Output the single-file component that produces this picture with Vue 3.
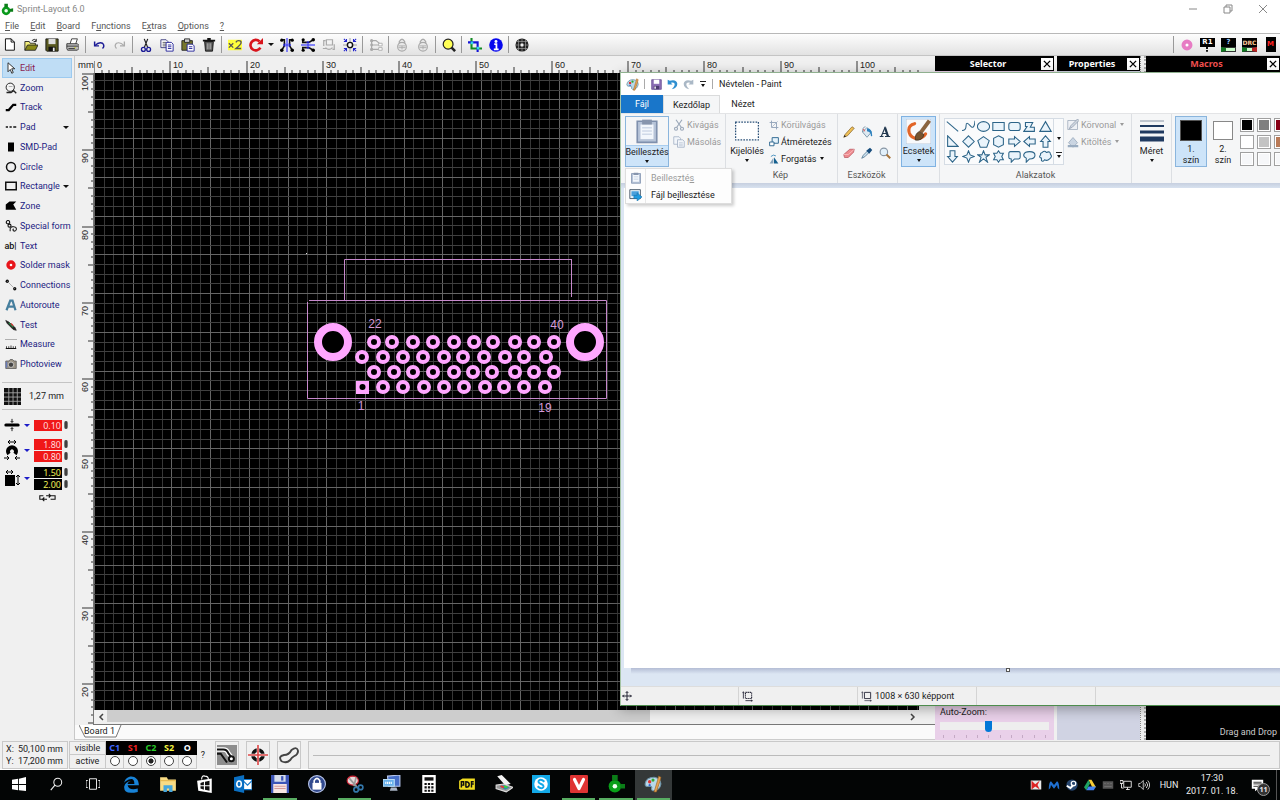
<script setup>
import { h, ref } from 'vue'

const icons = {
  leaf: '<circle cx="7" cy="10" r="5" fill="#0a9a1c"/><path d="M5 6V2h4v4M11 8l4-1v4h-4" fill="#0b7d18"/><circle cx="7" cy="10" r="2" fill="#f2fff2"/>',
  new: '<path d="M3 1h7l4 4v10H3z" fill="#fff" stroke="#111" stroke-width="1.2"/><path d="M10 1v4h4" fill="none" stroke="#111" stroke-width="1.2"/>',
  open: '<path d="M1 14V4h5l1 2h6v3" fill="#f3ee7a" stroke="#222"/><path d="M1 14l3-6h12l-3 6z" fill="#8a8a18" stroke="#222"/><path d="M9 3q3-3 5 0M14 1v3h-3" fill="none" stroke="#111"/>',
  save: '<path d="M1 1h14v14H2l-1-1z" fill="#5a5a20" stroke="#111"/><path d="M4 1h8v6H4z" fill="#ddd"/><path d="M4 10h8v5H4z" fill="#111"/><path d="M9 11h2v4H9z" fill="#eee"/>',
  print: '<path d="M5 7l2-6h7l-2 6" fill="#fff" stroke="#222"/><path d="M1 7h13l2 2v4l-2 2H2l-1-2z" fill="#bbb" stroke="#222"/><path d="M1 10h14M3 13h8" stroke="#222"/><path d="M10 12h2" stroke="#cc0"/>',
  undo: '<path d="M3 4v5h5" fill="none" stroke="#1c1c96" stroke-width="1.7"/><path d="M3 9q5-5 9-3 3 3 0 6" fill="none" stroke="#1c1c96" stroke-width="1.6"/>',
  redo: '<path d="M13 4v5H8" fill="none" stroke="#aaa" stroke-width="1.5"/><path d="M13 9Q8 4 4 6q-3 3 0 6" fill="none" stroke="#aaa" stroke-width="1.4"/>',
  cut: '<path d="M6 1l4 10M10 1L6 11" stroke="#222" stroke-width="1.4"/><circle cx="5" cy="13" r="2.2" fill="none" stroke="#1c1c96" stroke-width="1.5"/><circle cx="11" cy="13" r="2.2" fill="none" stroke="#1c1c96" stroke-width="1.5"/>',
  copy: '<path d="M1 2h6l2 2v7H1z" fill="#fff" stroke="#333377"/><path d="M3 5h4M3 7h4M3 9h4" stroke="#555"/><path d="M7 5h6l2 2v8H7z" fill="#fff" stroke="#1c1c96"/><path d="M9 8h4M9 10h4M9 12h4" stroke="#1c1c96"/>',
  paste: '<path d="M1 3h12v11H1z" fill="#77772b" stroke="#222"/><path d="M4 1h6v4H4z" fill="#ccc" stroke="#222"/><path d="M7 7h6l2 2v6H7z" fill="#fff" stroke="#1c1c96"/><path d="M9 10h4M9 12h4" stroke="#1c1c96"/>',
  trash: '<path d="M3 4h10l-1 11H4z" fill="#555" stroke="#111"/><path d="M1 3h14M6 1h4" stroke="#111" stroke-width="2"/><path d="M6 6v7M8 6v7M10 6v7" stroke="#bbb"/>',
  x2: '<path d="M0 2h16v12H0z" fill="#ffff3c"/><path d="M1 6l5 5M6 6l-5 5M9 5q1-2 3-2 3 0 3 2 0 2-6 7h6" fill="none" stroke="#555" stroke-width="1.5"/>',
  rotate: '<path d="M13 11A6 6 0 1 1 12 4" fill="none" stroke="#d8141c" stroke-width="3"/><path d="M9 7h7V0z" fill="#d8141c"/>',
  mirrorH: '<path d="M8 0v16" stroke="#22f" stroke-width="1.2"/><path d="M2 2h3v7l-3 5M14 2h-3v7l3 5" fill="none" stroke="#111" stroke-width="1.8"/><circle cx="2" cy="14" r="2"/><circle cx="14" cy="14" r="2"/><circle cx="2" cy="2.5" r="1.8"/><circle cx="14" cy="2.5" r="1.8"/><path d="M4 8h8M6 6L4 8l2 2M10 6l2 2-2 2" fill="none" stroke="#22f"/>',
  mirrorV: '<path d="M0 8h16" stroke="#22f" stroke-width="1.2"/><path d="M2 2v3h7l5-3M2 14v-3h7l5 3" fill="none" stroke="#111" stroke-width="1.8"/><circle cx="14" cy="2" r="2"/><circle cx="14" cy="14" r="2"/><circle cx="2.5" cy="2" r="1.8"/><circle cx="2.5" cy="14" r="1.8"/><path d="M8 4v8M6 6l2-2 2 2M6 10l2 2 2-2" fill="none" stroke="#22f"/>',
  swap: '<path d="M2 9V3h2M14 7v6h-2M5 2h7v6H5zM4 11q4 4 8 0M1 12h4" fill="none" stroke="#aaa" stroke-width="1.4"/>',
  snap: '<path d="M8 0v16M0 8h16" stroke="#999"/><circle cx="8" cy="8" r="3" fill="#fff" stroke="#111" stroke-width="1.7"/><path d="M1 1l3 3M4 1v3H1M15 1l-3 3M12 1v3h3M1 15l3-3M1 12h3v3M15 15l-3-3M12 15v-3h3" fill="none" stroke="#22c" stroke-width="1.2"/>',
  align: '<path d="M3 3v10M3 3h5l5 4M3 8h8M3 13h8" stroke="#aaa" stroke-width="1.4" fill="none"/><circle cx="3" cy="3" r="1.8" fill="#aaa"/><circle cx="3" cy="8" r="1.6" fill="#aaa"/><circle cx="3" cy="13" r="1.8" fill="#aaa"/><path d="M11 6h4v3h-4zM11 11h4v3h-4z" fill="#fff" stroke="#aaa"/>',
  lock: '<path d="M5 7V4q3-5 6 0v3" fill="none" stroke="#aaa" stroke-width="1.6"/><circle cx="8" cy="10" r="5" fill="#e8e8e8" stroke="#aaa" stroke-width="1.3"/><path d="M4 9h8M4 11h8M8 9v4" stroke="#aaa"/>',
  glass: '<circle cx="7" cy="7" r="5.6" fill="#ffff55" stroke="#222" stroke-width="1.4"/><path d="M11 11l4 4" stroke="#222" stroke-width="3"/>',
  crop: '<path d="M4 0v12h12" fill="none" stroke="#128c22" stroke-width="2.4"/><path d="M0 5h11v11" fill="none" stroke="#1313d6" stroke-width="2.4"/><path d="M3 4h3v3H3zM10 10h3v3h-3z" fill="#33d5e8"/>',
  info: '<circle cx="8" cy="8" r="7.8" fill="#0707ee"/><circle cx="8" cy="4" r="1.7" fill="#fff"/><path d="M6 7h2.500v6M5.500 13h5.500" fill="none" stroke="#fff" stroke-width="2"/>',
  globe: '<circle cx="8" cy="8" r="7.5" fill="#222"/><path d="M2 4h12M0 8h16M2 12h12M4 2v12M8 0v16M12 2v12" stroke="#999" stroke-width=".8"/><circle cx="8" cy="8" r="2.5" fill="#eee" stroke="#111"/>',
  padpink: '<circle cx="8" cy="8" r="4" fill="#fff" stroke="#e77cc4" stroke-width="4.5"/>',
  arrow: '<path d="M4 1v12l3-3 2 5 2-1-2-5h4z" fill="#fff" stroke="#222" stroke-width="1.2"/>',
  zoom: '<circle cx="7" cy="7" r="5.5" fill="#f4f4f4" stroke="#222" stroke-width="1.3"/><path d="M11 11l4 4M2 14h6l3-2" fill="none" stroke="#222" stroke-width="1.8"/><path d="M5 6h5" stroke="#999"/>',
  track: '<path d="M1 12h4l6-7h4" fill="none" stroke="#000" stroke-width="3"/>',
  pad: '<path d="M1 8h3M6 8h3M11 8h4" stroke="#111" stroke-width="2"/>',
  smd: '<path d="M4 2h8v12H4z" fill="#000"/>',
  circle: '<circle cx="8" cy="8" r="6" fill="none" stroke="#111" stroke-width="2"/>',
  rect: '<path d="M1 3h14v10H1z" fill="none" stroke="#111" stroke-width="2"/>',
  zone: '<path d="M1 13V6l5-4h9l-4 4 4 7z" fill="#000"/>',
  special: '<circle cx="4" cy="3" r="2.3" fill="none" stroke="#111" stroke-width="1.5"/><circle cx="6" cy="7.5" r="2" fill="none" stroke="#111" stroke-width="1.5"/><path d="M7 15q-1-7 5-6 4 1 3 4-2 3-4 1-1-2 1-2" fill="none" stroke="#333" stroke-width="1.6"/>',
  mask: '<circle cx="8" cy="8" r="4" fill="#fff" stroke="#e8161c" stroke-width="4.5"/>',
  conn: '<circle cx="3" cy="3" r="2.2" fill="#111"/><circle cx="13" cy="13" r="2.2" fill="#111"/><path d="M3 3l10 10" stroke="#999"/>',
  auto: '<path d="M2 15L7 2h3l4 13M5 10h7" fill="none" stroke="#467f9e" stroke-width="3"/>',
  test: '<path d="M1 2l4 2 8 7 2 4-4-1-8-8z" fill="#222" stroke="#222"/><path d="M5 5l6 6" stroke="#2a8a44" stroke-width="1.5"/><path d="M8 6l3 3" stroke="#c33" stroke-width="1.5"/>',
  measure: '<path d="M0 2h16" stroke="#999"/><path d="M1 14h14" stroke="#111" stroke-width="1.4"/><path d="M2 14v-3M5 14v-3M8 14v-4M11 14v-3M14 14v-3" stroke="#111"/>',
  photo: '<path d="M1 4h4l2-2h3l2 2h3v10H1z" fill="#9a9385" stroke="#555"/><circle cx="8" cy="9" r="3.6" fill="#444" stroke="#ddd"/><path d="M2 5v8" stroke="#667bb8" stroke-width="2"/>',
  grid: '<path d="M0 0h16v16H0z" fill="#111"/><path d="M0 4.500h16M0 8.500h16M0 12.500h16M4.500 0v16M8.500 0v16M12.500 0v16" stroke="#aaa" stroke-width=".8"/>',
  line: '<path d="M1 8h14" stroke="#000" stroke-width="3.5" stroke-linecap="round"/><path d="M8 1v4M8 15v-4M6.500 3.500L8 5l1.500-1.500M6.500 12.500L8 11l1.500 1.500" fill="none" stroke="#000"/>',
  ring: '<path d="M4 2h8M6 0L4 2l2 2M10 0l2 2-2 2" fill="none" stroke="#000"/><path d="M5 14a4 4 0 1 1 6 0" fill="none" stroke="#000" stroke-width="4"/><path d="M0 18h5M11 18h5M3 16l2 2-2 2M13 16l-2 2 2 2" fill="none" stroke="#000"/>',
  size: '<path d="M1 5h10v11H1z" fill="#000"/><path d="M2 2h7M4 0L2 2l2 2M7 0l2 2-2 2M14 5v10M12 7l2-2 2 2M12 13l2 2 2-2" fill="none" stroke="#000"/>',
  loop: '<path d="M5 3H1v4h4M12 3h6v4h-5M11 1l2 2-2 2M6 5L4 7l2 2M4 7h5M8 3h5" fill="none" stroke="#111" stroke-width="1.2"/>',
  trackmode: '<path d="M0 0h16v16H0z" fill="#8d8d8d"/><path d="M0 3.500h5q3 0 4 3l3 4" fill="none" stroke="#fff" stroke-width="3.600"/><path d="M0 3.500h5q3 0 4 3l3 4M0 7h3l5 7" fill="none" stroke="#111" stroke-width="1.6"/><circle cx="11.500" cy="11" r="2" fill="#fff" stroke="#111" stroke-width="1.6"/>',
  target: '<circle cx="8" cy="8" r="4" fill="none" stroke="#111" stroke-width="3"/><path d="M8 0v16M0 8h16" stroke="#fff" stroke-width="2"/><path d="M8 0v16M0 8h16" stroke="#dc4444" stroke-width="1.3"/>',
  blob: '<path d="M2 13q-3-4 2-5 4 0 6-4 4-3 5 0 1 3-3 5-2 1-3 3-3 3-7 1z" fill="none" stroke="#444" stroke-width="1.5"/>',
  palette: '<path d="M1 8q1-6 8-6 6 1 6 6-1 6-7 6-2-1-1-3 0-1-2-1-4 1-4-2z" fill="#b8d8ea" stroke="#6f94a8"/><circle cx="5" cy="6" r="1.5" fill="#d33"/><circle cx="8" cy="4.5" r="1.4" fill="#3a3"/><circle cx="5" cy="9" r="1" fill="#36c"/><path d="M9 15l3-10 1-4 2 1-1 4-3 9z" fill="#e8a252" stroke="#9a6425" stroke-width=".6"/>',
  psave: '<path d="M1 1h14v14H1z" fill="#8d6fb5" stroke="#5a3f87"/><path d="M4 1h8v6H4z" fill="#fff"/><path d="M4 10h8v5H4z" fill="#4c3a70"/><path d="M5 11h2v3H5z" fill="#fff"/>',
  pundo: '<path d="M1 1v7h7L5.500 5.500Q12 4 11 9q-1 3-4 6 8-2 8-8-1-7-11-4.500z" fill="#2f8fd0"/>',
  predo: '<path d="M15 1v7H8l2.500-2.500Q4 4 5 9q1 3 4 6-8-2-8-8 1-7 11-4.500z" fill="#aab8c6"/>',
  clip: '<path d="M2 2h12v13H2z" fill="#b7c4d8" stroke="#7f90ad"/><path d="M4 4h8v9H4z" fill="#f3f7fc"/><path d="M5 1h6v3H5z" fill="#8795ad"/><path d="M5 6h6M5 8h6M5 10h6" stroke="#cfd9e8"/>',
  pcut: '<path d="M4 1l7 10M12 1L5 11" stroke="#9aa7b8" stroke-width="1.5"/><circle cx="4" cy="13" r="2" fill="none" stroke="#9aa7b8" stroke-width="1.5"/><circle cx="12" cy="13" r="2" fill="none" stroke="#9aa7b8" stroke-width="1.5"/>',
  pcopy: '<path d="M1 1h7l2 2v8H1z" fill="#f2f5fa" stroke="#9eabc0"/><path d="M6 5h7l2 2v8H6z" fill="#f2f5fa" stroke="#9eabc0"/><path d="M8 9h5M8 11h5M8 13h5" stroke="#b8c3d3"/>',
  pfile: '<path d="M1 2h13v11H1z" fill="#e8f3fb" stroke="#345"/><path d="M3 4h9v6H3z" fill="#4aa0dc"/><path d="M6 9h4V6l6 5-6 5v-3H6z" fill="#209be0" stroke="#1670a8" stroke-width=".7"/>',
  select: '<path d="M2 2h28v22H2z" fill="#fff" stroke="#2a5078" stroke-width="1.5" stroke-dasharray="2 1.5"/>',
  pcrop: '<path d="M4 1v11h11M1 4h11v11" fill="none" stroke="#93a4ba" stroke-width="1.5"/><path d="M5 11l9-9" stroke="#93a4ba"/>',
  presize: '<path d="M5 1h10v9H5z" fill="#e4f2fb" stroke="#2d6690" stroke-width="1.5"/><path d="M1 8h7v6H1z" fill="#fff" stroke="#2d6690" stroke-width="1.5"/>',
  prot: '<path d="M1 15l6-9v9z" fill="#8aa6bd"/><path d="M8 15V5l7 10z" fill="#14608f"/><path d="M3 4q4-4 8-1" fill="none" stroke="#2c80b5" stroke-width="1.3"/>',
  pencil: '<path d="M1 15l2-4L12 1l3 2L6 13z" fill="#f0c055" stroke="#8a6830"/><path d="M1 15l1-3 2 2z" fill="#222"/>',
  bucket: '<path d="M2 8l6-6 6 6-6 7z" fill="#dfe9f1" stroke="#63849c"/><path d="M2 8q0-7 4-7" fill="none" stroke="#63849c"/><path d="M8 3q7 0 7 10-2 2-2-1 0-4-5-5z" fill="#2d82bf"/><path d="M3 4l2 3" stroke="#d66" stroke-width="1.5"/>',
  letterA: '<path d="M1 14h5M8 14h7M3 14L8 2l4 12M5 10h6" fill="none" stroke="#22384f" stroke-width="1.5"/><path d="M8 2l4 12" stroke="#22384f" stroke-width="3"/>',
  eraser: '<path d="M1 10l8-7h6l-1 4-7 7H2z" fill="#ee8a8e" stroke="#b85860"/><path d="M1 10h6l8-7" fill="none" stroke="#f9c3c5"/>',
  dropper: '<path d="M1 15l2-4 6-6 2 2-6 6z" fill="#cfe5f2" stroke="#456b88"/><path d="M7 5l5-4 3 3-4 5z" fill="#174c7c"/>',
  magnify: '<circle cx="6.5" cy="6.5" r="5" fill="#e2f0fa" stroke="#8795a4" stroke-width="1.5"/><path d="M10 10l5 5" stroke="#a8753c" stroke-width="2.5"/>',
  brush: '<path d="M0 0h32v32H0z" fill="#f8f9fb" stroke="#a9bdd3"/><path d="M11 6q-9 2-7 11 2 8 12 8 6-1 9-6" fill="none" stroke="#e26528" stroke-width="4" stroke-linecap="round"/><path d="M30 2L19 17" stroke="#8a6440" stroke-width="5"/><path d="M12 27q-1-8 5-11l6 4q-2 8-11 7z" fill="#75532f" stroke="#3f3020"/>',
  poutline: '<path d="M1 2h13v12H1z" fill="#eef1f5" stroke="#9ba8b8"/><path d="M3 13l2-4 9-9 2 2-9 9z" fill="#cfd6df" stroke="#8d9bad"/>',
  pfill: '<path d="M2 9l6-7 6 7-6 6z" fill="#cad5e2" stroke="#94a5b8"/><path d="M1 12h14v3H1z" fill="#9aacc0"/>',
  move: '<path d="M8 1v14M1 8h14M6 3l2-2 2 2M6 13l2 2 2-2M3 6L1 8l2 2M13 6l2 2-2 2" fill="none" stroke="#223" stroke-width="1.6"/>',
  selsize: '<path d="M5 2h9v9H5z" fill="none" stroke="#223" stroke-width="1.6" stroke-dasharray="2 1"/><path d="M2 2v9M1 3l1-2 1 2M5 14h10M13 13l2 1-2 1" fill="none" stroke="#223" stroke-width="1.200"/>',
  imgsize: '<path d="M5 2h9v9H5z" fill="none" stroke="#334" stroke-width="1.4"/><path d="M2 2v9M1 3l1-2 1 2M5 14h10M13 13l2 1-2 1" fill="none" stroke="#334"/>',
  s0: '<path d="M1 2l14 12"/>', s1: '<path d="M0 13q5 0 5-6t5 0 6-6" fill="none"/>', s2: '<ellipse cx="8" cy="8" rx="7.5" ry="6"/>', s3: '<path d="M1 3h14v10H1z"/>', s4: '<rect x="1" y="3" width="14" height="10" rx="3"/>', s5: '<path d="M1 14l4-6h-2V3h9l-3 6h5v5z"/>', s6: '<path d="M8 2l7 12H1z"/>',
  s7: '<path d="M2 1v13h13z"/>', s8: '<path d="M8 1l7 7-7 7-7-7z"/>', s9: '<path d="M8 2l7 5-3 8H4L1 7z"/>', s10: '<path d="M8 1l6 3v8l-6 3-6-3V4z"/>', s11: '<path d="M1 5h7V2l7 6-7 6v-3H1z"/>', s12: '<path d="M15 5H8V2L1 8l7 6v-3h7z"/>', s13: '<path d="M5 15V8H2l6-7 6 7h-3v7z"/>',
  s14: '<path d="M5 1v7H2l6 7 6-7h-3V1z"/>', s15: '<path d="M8 1l2 5 5 2-5 2-2 5-2-5-5-2 5-2z"/>', s16: '<path d="M8 1l2 5h5l-4 3 2 6-5-4-5 4 2-6-4-3h5z"/>', s17: '<path d="M8 1l2 3h4l-2 4 2 4h-4l-2 3-2-3H2l2-4-2-4h4z"/>', s18: '<path d="M3 2h10q2 0 2 2v5q0 2-2 2H8l-4 4v-4q-3 0-3-2V4q0-2 2-2z"/>', s19: '<path d="M8 2c9 0 9 9 0 9l-4 4V10C-1 8 0 2 8 2z"/>', s20: '<path d="M4 3q3-3 5 0 5-2 5 2 3 3-1 6-3 3-6 1-2 3-4 1v-3q-4-1-1-4-1-2 2-3z"/>',
  win: '<path d="M0 3l7-1v6H0zM8 2l8-2v8H8zM0 9h7v6l-7-1zM8 9h8v7l-8-1z" fill="#fff"/>',
  search: '<circle cx="10" cy="6" r="4.5" fill="none" stroke="#eee" stroke-width="1.2"/><path d="M7 9l-5 6" stroke="#eee" stroke-width="1.3"/>',
  task: '<path d="M4 2h8v12H4zM2 4H0v8h2M14 4h2v8h-2" fill="none" stroke="#eee" stroke-width="1.1"/>',
  edge: '<path d="M2 7C3-1 15-1 15 9H5q1 5 9 3v3Q1 18 2 10q1-4 6-5-3 1-3 3h6Q11 2 6 4 3 5 1 8z" fill="#1883d7"/>',
  folder: '<path d="M1 2h6l1 2h7v10H1z" fill="#f9dc84"/><path d="M1 5h14" stroke="#e6b84e"/><path d="M4 9h8v6h-3v-3H7v3H4z" fill="#46a7dd"/>',
  store: '<path d="M1 5l13-2v13L2 14z" fill="#fff"/><path d="M5 4q0-4 3-3 3 0 3 3" fill="none" stroke="#fff"/><path d="M4 7l3-1v3H4zM8 6l4-1v4H8zM4 10h3v3l-3-1zM8 10h4v4l-4-1z" fill="#111"/>',
  outlook: '<path d="M8 4h8v9H8z" fill="#fff" stroke="#1477c8"/><path d="M8 5l4 4 4-4" fill="none" stroke="#1477c8"/><path d="M0 2l9-2v16l-9-2z" fill="#0a6fc2"/><ellipse cx="4.5" cy="8" rx="2" ry="2.7" fill="none" stroke="#fff" stroke-width="1.4"/>',
  floppy: '<path d="M0 0h16v16H0z" fill="#3c55b8"/><path d="M3 0h10v6H3z" fill="#d6ddec"/><path d="M9 1h2v4H9z" fill="#3c55b8"/><path d="M2 8h12v8H2z" fill="#f6e4e4"/><path d="M3 10h10M3 12h10" stroke="#d59a9a"/>',
  keylock: '<circle cx="8" cy="8" r="7.5" fill="#324a8e" stroke="#b8c5e8"/><path d="M4 7h8v6H4z" fill="#fff"/><path d="M5.500 7V5q2.500-4 5 0v2" fill="none" stroke="#fff" stroke-width="1.4"/>',
  snip: '<ellipse cx="6" cy="5" rx="5" ry="4" fill="#e8d8d8" stroke="#c23"/><path d="M3 3l7 8M9 2L7 10" stroke="#999" stroke-width="1.5"/><circle cx="9" cy="13" r="2" fill="none" stroke="#37a" stroke-width="1.5"/><circle cx="13" cy="11" r="2" fill="none" stroke="#37a" stroke-width="1.5"/>',
  remote: '<path d="M4 1l11-1v10H5z" fill="#466fc8" stroke="#b8c8ee"/><path d="M0 4h10v6H0z" fill="#67b0ea" stroke="#b9def8"/><path d="M2 7h6" stroke="#fff" stroke-dasharray="1 .6" stroke-width="2"/><path d="M7 11h5l1 3H6z" fill="#aab4c4"/>',
  calc: '<path d="M2 0h12v16H2z" fill="#fff"/><path d="M4 2h8v3H4z" fill="#111"/><path d="M4 8h8M4 11h8M4 14h8" stroke="#111" stroke-width="1.8" stroke-dasharray="2 1"/>',
  pdf: '<path d="M1 5l3-2h11v10H2l-1-1z" fill="#f0dc20"/><path d="M3 11V6h2v3H3M7 11V6q3 0 3 2.500T7 11M12 11V6h2M12 8h2" fill="none" stroke="#111" stroke-width="1.3"/>',
  scanner: '<path d="M2 1l4-1 8 8-5 1z" fill="#f4f4f4"/><path d="M1 9l7-1 8 3-6 4-9-3z" fill="#999" stroke="#ddd"/><path d="M4 10l4-1 5 2-4 2z" fill="#38a"/><path d="M5 10l3 1" stroke="#e33" stroke-width="1.5"/><path d="M8 10l3 1" stroke="#3d3" stroke-width="1.5"/>',
  skype: '<path d="M0 0h16v16H0z" fill="#12a9e8"/><circle cx="8" cy="8" r="6" fill="#fff"/><path d="M11 6Q8 3 6 5q-1 2 2 3t2 3q-2 2-5-1" fill="none" stroke="#12a9e8" stroke-width="1.7"/>',
  vivaldi: '<rect width="16" height="16" rx="1" fill="#df3333"/><path d="M4 4l4 8 4-8" fill="none" stroke="#fff" stroke-width="2.8" stroke-linecap="round" stroke-linejoin="round"/>',
  sprint: '<circle cx="7" cy="10" r="5.5" fill="#08a018"/><path d="M4.500 5V0h5v5M12 8h4v4h-4" fill="#0b7d18"/><circle cx="7" cy="10" r="2" fill="#f2fff2"/>',
  tk: '<path d="M1 2h14v12H1z" fill="#e8e8e8"/><path d="M2 2l5 5 6-5-3 6 3 6-6-4-5 4z" fill="#d22"/>',
  tm: '<path d="M1 14Q1 4 4 3l4 5 4-5q3 1 3 11-3-2-3-6l-4 5-4-5q0 4-3 6z" fill="#1f6fd0"/>',
  ts: '<circle cx="8" cy="8" r="7.5" fill="#27466f"/><circle cx="10" cy="6" r="3" fill="#27466f" stroke="#fff" stroke-width="1.6"/><path d="M1 9l5 3 4-4" fill="none" stroke="#fff" stroke-width="2.5"/>',
  td: '<path d="M6 1h4l6 10h-5z" fill="#f8cd34"/><path d="M6 1L0 11l3 4 5-9z" fill="#1ea362"/><path d="M3 15l3-5h10l-3 5z" fill="#4384f4"/>',
  tb: '<path d="M1 3h14v10H1z" fill="#555"/><path d="M3 6h2M7 6h2M11 6h2M3 10h10" stroke="#777"/>',
  tn: '<path d="M5 3h10v8H5zM8 14h5M10 11v3M0 2h4v4H0zM2 6v6h3" fill="none" stroke="#eee" stroke-width="1.2"/>',
  tv: '<path d="M1 6h2l4-4v12l-4-4H1z" fill="none" stroke="#eee"/><path d="M9 6q2 2 0 4M11 4q4 4 0 8M13 2q5 6 0 12" fill="none" stroke="#eee" stroke-width="1.1"/>',
  note: '<path d="M1 1h14v11H9l-4 3v-3H1z" fill="#fff"/><path d="M3 4h10M3 6h10M3 9h7" stroke="#111"/>',
  close: '<path d="M3 3l10 10M13 3L3 13" stroke="#000" stroke-width="2.2"/>'
}
const Ico = (p) => h('svg', { viewBox: p.box || '0 0 16 16', width: p.w || p.s || 14, height: p.s || 14, 'aria-hidden': 'true', innerHTML: icons[p.name] })
Ico.props = ['name', 's', 'w', 'box']

const menus = ['File', 'Edit', 'Board', 'Functions', 'Extras', 'Options', '?']
const menuKey = (m) => (m === 'Functions' ? 1 : m === 'Extras' ? 1 : 0)
const tools = ['new', 'open', 'save', 'print', '|', 'undo', 'redo', '|', 'cut', 'copy', 'paste', 'trash', '|', 'x2', 'rotate', 'v', 'mirrorH', 'mirrorV', 'swap', 'snap', '|', 'align', '|', 'lock', 'lock', '|', 'glass', '|', 'crop', 'info', '|', 'globe']
const side = [['arrow', 'Edit'], ['zoom', 'Zoom'], ['track', 'Track'], ['pad', 'Pad', 1], ['smd', 'SMD-Pad'], ['circle', 'Circle'], ['rect', 'Rectangle', 1], ['zone', 'Zone'], ['special', 'Special form'], ['', 'Text'], ['mask', 'Solder mask'], ['conn', 'Connections'], ['auto', 'Autoroute'], ['test', 'Test'], ['measure', 'Measure'], ['photo', 'Photoview']]
const mode = ref('Edit')
const params = [
  { ic: 'line', s: 14, c: 'red', v: [['0.10', 'Track width']] },
  { ic: 'ring', s: 22, box: '0 0 16 20', c: 'red', v: [['1.80', 'Pad diameter'], ['0.80', 'Drill']] },
  { ic: 'size', s: 18, c: 'blk', v: [['1.50', 'SMD width'], ['2.00', 'SMD height']] }
]

const MM = 7.63
const px = Math.round
const gridV = Array.from({ length: 120 }, (_, i) => ({ p: px(i * 9.68), b: i % 4 === 0 }))
const gridH = Array.from({ length: 80 }, (_, i) => ({ p: px(7 + i * 9.69), b: i % 4 === 2 }))
const ticksX = Array.from({ length: 109 }, (_, i) => ({ p: px(i * MM), n: i }))
const ticksY = Array.from({ length: 86 }, (_, i) => ({ p: px(1 + i * MM), n: 100 - i }))
const tickLen = (n) => (n % 10 === 0 ? 12 : n % 5 === 0 ? 6 : 3)

const pads = [
  ...[374, 392, 413, 433, 454, 474, 493, 515, 534, 554].map((x) => [x, 342]),
  ...[362, 383, 403, 423, 444, 463, 484, 505, 524, 546].map((x) => [x, 357]),
  ...[374, 394, 413, 433, 454, 473, 492, 515, 534, 554].map((x) => [x, 372]),
  ...[383, 403, 424, 444, 464, 485, 504, 524, 545].map((x) => [x, 387])
]
const layers = [['C1', '#3f66ff'], ['S1', '#f02020'], ['C2', '#28c828'], ['S2', '#f4f440'], ['O', '#ffffff']]
const active = ref('C2')
const palette = ['#000', '#7f7f7f', '#880015', '#fff', '#c3c3c3', '#b97a57', '#f6f7f9', '#f6f7f9', '#f6f7f9']
const apps = [['win', 'Start'], ['search', 'Search'], ['task', 'Task view'], ['edge', 'Edge'], ['folder', 'Explorer'], ['store', 'Store'], ['outlook', 'Outlook'], ['floppy', 'Commander', 1], ['keylock', 'Passwords'], ['snip', 'Snipping', 1], ['remote', 'Remote'], ['calc', 'Calculator'], ['pdf', 'PDF'], ['scanner', 'Scanner'], ['skype', 'Skype'], ['vivaldi', 'Vivaldi', 1], ['sprint', 'Sprint-Layout', 1], ['palette', 'Paint', 2]]
const tray = ['tk', 'tm', 'ts', 'td', 'tb', 'tn', 'tv']
</script>

<template>
  <div class="desktop">
    <header class="title">
      <Ico name="leaf" :s="14" /><span>Sprint-Layout 6.0</span>
      <div class="winbtns">
        <button aria-label="Minimize"><svg width="10" height="10"><path d="M1 5h8" stroke="#888" /></svg></button>
        <button aria-label="Restore"><svg width="10" height="10"><path d="M1 3h6v6H1zM3 3V1h6v6H7" fill="none" stroke="#888" /></svg></button>
        <button aria-label="Close"><svg width="10" height="10"><path d="M1 1l8 8M9 1l-8 8" stroke="#888" /></svg></button>
      </div>
    </header>
    <nav class="menu">
      <button v-for="m in menus" :key="m">{{ m.slice(0, menuKey(m)) }}<u>{{ m[menuKey(m)] }}</u>{{ m.slice(menuKey(m) + 1) }}</button>
    </nav>
    <div class="toolbar">
      <template v-for="(t, i) in tools" :key="i">
        <i v-if="t === '|'" class="sep"></i>
        <button v-else-if="t === 'v'" class="drop" aria-label="Rotate options"><i class="tri"></i></button>
        <button v-else :aria-label="t"><Ico :name="t" :s="t === 'new' || t === 'print' ? 13 : 14" /></button>
      </template>
      <div class="toolright">
        <i class="sep"></i>
        <button aria-label="Pads"><Ico name="padpink" :s="14" /></button>
        <button class="chip"><b>R1</b><i class="stem"></i></button>
        <button class="chip help"><b>?</b><i class="leds"></i></button>
        <button class="chip drc"><b>DRC</b><i class="leds"></i></button>
        <button class="chip mac"><b>M</b></button>
      </div>
    </div>

    <main class="main">
      <aside class="side">
        <div class="modes">
          <button v-for="s in side" :key="s[1]" :class="{ on: mode === s[1] }" @click="mode = s[1]">
            <span class="ic"><Ico v-if="s[0]" :name="s[0]" :s="12" /><b v-else>ab|</b></span>
            <span>{{ s[1] }}</span><i v-if="s[2]" class="tri"></i>
          </button>
        </div>
        <button class="gridrow"><Ico name="grid" :s="17" /><span>1,27 mm</span></button>
        <div v-for="p in params" :key="p.ic" class="prm">
          <Ico :name="p.ic" :s="p.s" :w="16" :box="p.box" /><i class="tri blue"></i>
          <div><template v-for="f in p.v" :key="f[1]"><input :class="p.c" :value="f[0]" :aria-label="f[1]" /><i class="spin"></i></template></div>
        </div>
        <button class="loop" aria-label="Swap"><Ico name="loop" :s="9" :w="18" box="0 0 18 10" /></button>
      </aside>

      <section class="work">
        <div class="corner">mm</div>
        <svg class="rulerx">
          <path v-for="t in ticksX" :key="t.n" :d="`M${t.p} 17v-${tickLen(t.n)}`" stroke="#333" />
          <text v-for="t in ticksX.filter((k) => k.n % 10 === 0)" :key="t.n" :x="t.p + 3" y="12">{{ t.n }}</text>
        </svg>
        <svg class="rulery">
          <g v-for="t in ticksY" :key="t.n"><path :d="`M19 ${t.p}h-${tickLen(t.n)}`" stroke="#333" /></g>
          <text v-for="t in ticksY.filter((k) => k.n % 10 === 0)" :key="t.n" :transform="`translate(13 ${t.p + (t.n > 99 ? 17 : 13)}) rotate(-90)`">{{ t.n }}</text>
        </svg>
        <svg class="board">
          <rect v-for="g in gridV" :key="'v' + g.p" :x="g.p" y="0" width="1" height="100%" :fill="g.b ? '#666' : '#373737'" />
          <rect v-for="g in gridH" :key="'h' + g.p" x="0" :y="g.p" width="100%" height="1" :fill="g.b ? '#666' : '#404040'" />
          <g transform="translate(-94 -73)" stroke="#ffa6ff" fill="none">
            <path d="M307.500 398.500V302M309 300.500H606.500V398.500H307.500M344.500 300V259.500H572M571.500 259V297" stroke="#c789cc" />
            <circle v-for="x in [333, 585]" :key="x" :cx="x" cy="342" r="15" stroke-width="8" fill="#000" />
            <circle v-for="(p, i) in pads" :key="i" :cx="p[0]" :cy="p[1]" r="5" stroke-width="4" fill="#000" />
            <rect x="358" y="383" width="9" height="9" stroke-width="4" fill="#ffa6ff" />
            <circle cx="362.500" cy="387" r="3" stroke="none" fill="#000" />
          </g>
          <g class="nums" transform="translate(-94 -73)">
            <text x="375" y="328">22</text><text x="557" y="329">40</text><text x="361" y="410">1</text><text x="545" y="412">19</text>
          </g>
          <rect x="212" y="180" width="1" height="1" fill="#ddd" />
        </svg>
        <div class="hscroll"><button aria-label="Scroll left"><svg width="6" height="8"><path d="M5 1L2 4l3 3" fill="none" stroke="#444" stroke-width="1.5" /></svg></button><div class="track"><i></i></div><button aria-label="Scroll right"><svg width="6" height="8"><path d="M1 1l3 3-3 3" fill="none" stroke="#444" stroke-width="1.5" /></svg></button></div>
        <div class="vscroll"></div>
        <div class="tabs">
          <svg width="44" height="13"><path d="M0 0l6 12h31l5-12" fill="#fff" stroke="#777" /></svg>
          <button>Board 1</button>
        </div>
      </section>

      <section class="panel selector">
        <h2><span>Selector</span><button aria-label="Close selector"><Ico name="close" :s="10" /></button></h2>
        <div class="auto"><label for="az">Auto-Zoom:</label><input id="az" type="range" min="0" max="9" step="1" value="4" /><div class="marks"><i v-for="n in 10" :key="n"></i></div></div>
      </section>
      <section class="panel props"><h2><span>Properties</span><button aria-label="Close properties"><Ico name="close" :s="10" /></button></h2></section>
      <i class="grip"></i>
      <section class="panel macros"><h2><span>Macros</span><button aria-label="Close macros"><Ico name="close" :s="10" /></button></h2><p>Drag and Drop</p></section>
    </main>

    <footer class="status">
      <dl class="cell coords"><dt>X:</dt><dd>50,100 mm</dd><dt>Y:</dt><dd>17,200 mm</dd></dl>
      <table class="layers">
        <tbody>
          <tr><th>visible</th><td v-for="l in layers" :key="l[0]" class="lay" :style="{ color: l[1] }">{{ l[0] }}</td></tr>
          <tr><th>active</th><td v-for="l in layers" :key="l[0]"><input v-model="active" type="radio" name="layer" :value="l[0]" :aria-label="l[0]" /></td></tr>
        </tbody>
      </table>
      <button class="q">?</button>
      <button class="cell sq" aria-label="Track mode"><Ico name="trackmode" :s="20" /></button>
      <button class="cell sq" aria-label="Crosshair"><Ico name="target" :s="20" /></button>
      <button class="cell sq" aria-label="Outline"><Ico name="blob" :s="20" /></button>
      <div class="cell rest"><hr /></div>
    </footer>

    <footer class="taskbar">
      <div class="apps">
        <button v-for="a in apps" :key="a[1]" :aria-label="a[1]" :class="{ run: a[2], cur: a[2] === 2 }"><Ico :name="a[0]" :s="['win', 'search', 'task'].includes(a[0]) ? 14 : 18" /></button>
      </div>
      <div class="tray">
        <button v-for="t in tray" :key="t" :aria-label="t"><Ico :name="t" :s="12" /></button>
        <button class="lang">HUN</button>
        <time><span>17:30</span><span>2017. 01. 18.</span></time>
        <button class="note" aria-label="Notifications"><Ico name="note" :s="13" /><b>11</b></button>
        <i class="peek"></i>
      </div>
    </footer>

    <section class="paint">
      <header class="ptitle">
        <Ico name="palette" :s="13" /><i class="bar"></i><button aria-label="Save"><Ico name="psave" :s="11" /></button><button aria-label="Undo"><Ico name="pundo" :s="11" /></button><button aria-label="Redo"><Ico name="predo" :s="11" /></button><i class="tri lined"></i><i class="bar"></i><span>Névtelen - Paint</span>
      </header>
      <nav class="ptabs"><button class="file">Fájl</button><button class="home">Kezdőlap</button><button>Nézet</button></nav>
      <div class="ribbon">
        <div class="grp g1">
          <div class="row">
            <button class="big paste"><span class="up"><Ico name="clip" :s="26" /></span><span class="dn">Beillesztés<i class="tri"></i></span></button>
            <div class="list off"><button><Ico name="pcut" :s="12" />Kivágás</button><button><Ico name="pcopy" :s="12" />Másolás</button></div>
          </div>
        </div>
        <div class="grp g2">
          <div class="row">
            <button class="big"><span class="up"><Ico name="select" :s="22" :w="26" box="0 0 32 26" /></span><span class="dn">Kijelölés<i class="tri"></i></span></button>
            <div class="list"><button class="off"><Ico name="pcrop" :s="10" />Körülvágás</button><button><Ico name="presize" :s="10" />Átméretezés</button><button><Ico name="prot" :s="10" />Forgatás<i class="tri"></i></button></div>
          </div>
          <p>Kép</p>
        </div>
        <div class="grp g3">
          <div class="six"><button v-for="n in ['pencil', 'bucket', 'letterA', 'eraser', 'dropper', 'magnify']" :key="n" :aria-label="n"><Ico :name="n" :s="12" /></button></div>
          <p>Eszközök</p>
        </div>
        <div class="grp g4"><button class="big sel"><span class="up"><Ico name="brush" :s="25" box="0 0 32 32" /></span><span class="dn">Ecsetek<i class="tri"></i></span></button></div>
        <div class="grp g5">
          <div class="row">
            <div class="gallery">
              <div class="shapes"><button v-for="n in 21" :key="n" :aria-label="'Shape ' + n"><Ico :name="'s' + (n - 1)" :s="13" class="shp" /></button></div>
              <div class="updn"><i class="tri dim"></i><i class="tri"></i><i class="tri lined"></i></div>
            </div>
            <div class="list off"><button><Ico name="poutline" :s="12" />Körvonal<i class="tri"></i></button><button><Ico name="pfill" :s="12" />Kitöltés<i class="tri"></i></button></div>
          </div>
          <p>Alakzatok</p>
        </div>
        <div class="grp g6"><button class="big"><span class="up"><svg width="24" height="24"><path d="M0 2h24" stroke="#8a96a6" /><path d="M0 7h24" stroke="#203a60" stroke-width="2" /><path d="M0 13h24" stroke="#203a60" stroke-width="3" /><path d="M0 20h24" stroke="#203a60" stroke-width="5" /></svg></span><span class="dn">Méret<i class="tri"></i></span></button></div>
        <div class="grp g7">
          <button class="color cur"><i class="sw black"></i><span>1.<br />szín</span></button>
          <button class="color"><i class="sw"></i><span>2.<br />szín</span></button>
          <div class="pal"><button v-for="(c, i) in palette" :key="i" :style="{ background: c }" :aria-label="'Color ' + (i + 1)"></button></div>
        </div>
      </div>
      <div class="canvas"><div class="sheet"></div><div class="shade"></div><i class="handle"></i></div>
      <footer class="pstat"><span><Ico name="move" :s="10" /></span><span><Ico name="selsize" :s="11" /></span><span><Ico name="imgsize" :s="11" />1008 × 630 képpont</span><span></span><span></span></footer>
      <div class="popup"><button class="off"><i><Ico name="clip" :s="12" /></i>Beilleszté<u>s</u></button><button><i><Ico name="pfile" :s="13" /></i>Fájl be<u>i</u>llesztése</button></div>
    </section>
  </div>
</template>

<style>
html, body, #app { height: 100%; margin: 0; overflow: hidden; }
</style>
<style scoped>
* { box-sizing: border-box; }
.desktop { position: relative; height: 100vh; display: flex; flex-direction: column; overflow: hidden; background: #f0f0f0; color: #222; font: 9px Roboto, "Noto Sans", sans-serif; }
button { border: 0; padding: 0; margin: 0; background: none; font: inherit; color: inherit; display: flex; align-items: center; justify-content: center; white-space: nowrap; }
svg { display: block; flex: none; }
p, h2, dl, dd { margin: 0; }
.tri { width: 0; height: 0; flex: none; border: 3px solid transparent; border-top-color: #111; border-bottom: 0; }
.paint .tri { border-width: 3px 2px 0; }
.tri.blue { border-top-color: #1c1cc8; }
.title { height: 18px; background: #fff; display: flex; align-items: center; gap: 3px; color: #888; flex: none; }
.winbtns { margin-left: auto; display: flex; }
.winbtns button { width: 35px; height: 16px; }
.menu { height: 15px; background: #fff; display: flex; gap: 11px; padding: 0 5px; color: #555; flex: none; }
.toolbar { height: 23px; margin-left: -1px; display: flex; align-items: center; border-top: 1px solid #b8b8b8; border-bottom: 1px solid #c4c4c4; background: linear-gradient(#fdfdfd, #e2e2e2); flex: none; }
.toolbar button { width: 21px; height: 20px; flex: none; }
.toolbar .drop { width: 10px; }
.sep { width: 1px; height: 17px; margin: 0 2px; background: #999; flex: none; }
.toolright { margin-left: auto; display: flex; align-items: center; margin-right: -1px; }
.toolbar .chip { flex-direction: column; }
.chip b { width: 15px; height: 9px; background: #000; color: #fff; font: bold 7px/9px "DejaVu Sans", sans-serif; text-align: center; }
.chip .stem { width: 3px; height: 5px; border-left: 2px dotted #111; }
.chip.help b { color: #9cf; }
.chip.drc b { color: #fc9; font-size: 6px; }
.chip .leds { width: 15px; height: 5px; background: #cfc; border: 1px solid #333; border-left: 5px solid #172; }
.chip.drc .leds { border-right: 5px solid #b22; }
.chip.mac b { width: 10px; height: 15px; color: #f22; line-height: 15px; }
.main { flex: 1; min-height: 0; display: flex; }
.side { width: 75px; flex: none; padding: 2px 2px 0; border-right: 1px solid #c8c8c8; }
.modes { height: 316px; display: grid; grid-auto-rows: 1fr; color: #1c1c82; }
.modes button { justify-content: flex-start; border: 1px solid transparent; }
.modes button.on { background: #bfddf5; border-color: #9ccaf0; color: #8a1c50; }
.modes .ic { width: 15px; margin-right: 2px; display: flex; justify-content: center; flex: none; color: #111; }
.ic b { font-weight: 500; }
.modes .tri { margin-left: auto; margin-right: 2px; }
.gridrow { width: 100%; height: 28px; margin: 8px 0 5px; border-top: 1px solid #c4c4c4; border-bottom: 1px solid #c4c4c4; justify-content: flex-start; padding-left: 2px; gap: 8px; }
.prm { display: grid; grid-template-columns: 16px 6px auto; justify-content: start; align-items: center; justify-items: center; gap: 4px; padding-left: 2px; height: 26px; margin-bottom: 2px; }
.prm > div { display: grid; grid-template-columns: 28px 4px; gap: 1px 2px; align-items: center; }
.prm input { width: 28px; height: 11px; padding: 0 1px; border: 0; text-align: right; font: 9px "Noto Sans", sans-serif; }
.spin { width: 4px; height: 8px; border-radius: 2px; background: linear-gradient(90deg, #999, #222, #999); }
.gridrow + .prm { height: 20px; }
.red { background: #f01818; color: #fdd; }
.blk { background: #000; color: #ee5; }
.loop { margin-left: 36px; height: 9px; }
.work { flex: 1; min-width: 0; display: grid; grid-template-columns: 19px 1fr 16px; grid-template-rows: 17px 1fr 15px 15px; }
.corner { padding: 3px 0 0 3px; line-height: 12px; }
.rulerx { grid-column: 2; width: 100%; height: 17px; }
.rulery { grid-column: 1; grid-row: 2 / 4; width: 19px; height: 100%; border-right: 1px solid #777; }
.rulerx text, .rulery text { font: 9px "Liberation Sans", sans-serif; fill: #222; }
.board { grid-column: 2; grid-row: 2; width: 100%; height: 100%; background: #000; }
.nums text { font: 12px "Liberation Sans", sans-serif; fill: #d39ad8; text-anchor: middle; }
.hscroll { grid-column: 2; grid-row: 3; display: flex; border-bottom: 1px solid #777; }
.hscroll button { width: 13px; height: 13px; }
.hscroll .track { flex: 1; }
.hscroll .track i { display: block; width: 68%; height: 12px; background: #cdcdcd; }
.vscroll { grid-column: 3; grid-row: 1 / 4; border-bottom: 1px solid #777; }
.tabs { grid-column: 1 / 4; grid-row: 4; position: relative; background: #fafafa; border-bottom: 1px solid #ccc; padding-left: 4px; }
.tabs button { position: absolute; left: 9px; top: 0; height: 12px; }
.panel { display: flex; flex-direction: column; justify-content: space-between; flex: none; }
.panel h2 { height: 15px; background: #000; color: #fff; font: bold 9px/14px "Noto Sans", sans-serif; display: flex; align-items: center; }
.panel h2 span { flex: 1; text-align: center; }
.panel h2 button { width: 12px; height: 12px; margin-right: 1px; background: #fff; }
.selector { width: 119px; background: #e9d0e9; margin-right: 3px; }
.props { width: 83px; background: #d0d3e3; }
.macros { width: 134px; background: #000; color: #ccc; text-align: right; }
.macros p { padding: 0 3px 2px; line-height: 12px; }
.panel.macros h2 { color: #f15050; }
.grip { width: 6px; border-left: 1px dotted #888; border-right: 2px dotted #aaa; }
.auto { padding: 0 5px 2px; line-height: 12px; }
.auto input { display: block; width: 100%; height: 14px; margin: 1px 0 0; appearance: none; background: linear-gradient(#eee, #eee) center / 100% 8px no-repeat; }
.auto input::-webkit-slider-thumb { appearance: none; width: 7px; height: 11px; background: #0078d7; border-radius: 0 0 4px 4px; }
.marks { display: flex; justify-content: space-between; padding: 2px 3px 0; }
.marks i { width: 1px; height: 3px; background: #c4a9c4; }
.status { height: 30px; flex: none; display: flex; gap: 7px; align-items: center; padding-left: 2px; border-bottom: 1px solid #fff; background: #f0f0f0; }
.cell { height: 28px; border: 1px solid #c9c9c9; }
.coords { width: 66px; margin-right: -6px; display: grid; grid-template-columns: auto 1fr; align-content: center; padding: 0 4px 0 3px; line-height: 12px; }
.coords dd { text-align: right; }
.layers { border-collapse: collapse; width: 128px; height: 28px; table-layout: fixed; margin-right: -6px; }
.layers th { width: 36px; font-weight: normal; }
.layers td, .layers th { padding: 0; text-align: center; border: 1px solid #c9c9c9; line-height: 12px; }
.layers .lay { background: #000; border-color: #000; font: bold 9px/12px "Noto Sans", sans-serif; }
.layers input { appearance: none; display: block; width: 10px; height: 10px; margin: 1px auto; border: 1px solid #444; border-radius: 50%; background: #fff; }
.layers input:checked { background: radial-gradient(#222 40%, #fff 50%); }
.q { width: 10px; }
.sq { width: 24px; }
.rest { flex: 1; padding: 0 9px 0 4px; }
.rest hr { margin: 13px 0 0; border: 0; border-top: 1px solid #bbb; }
.taskbar { height: 30px; flex: none; display: flex; justify-content: space-between; background: #030505; color: #eee; }
.apps { width: 672px; display: grid; grid-auto-flow: column; grid-auto-columns: 1fr; }
.apps button { border-bottom: 2px solid transparent; }
.apps .run { border-image: linear-gradient(90deg, transparent 10%, #58ad62 10% 90%, transparent 90%) 2; }
.apps .cur { background: #343838; }
.tray { display: flex; align-items: center; }
.tray button { width: 18px; }
.tray .lang { width: 32px; }
.tray time { width: 54px; display: grid; text-align: center; line-height: 13px; white-space: nowrap; }
.tray .note { width: 37px; position: relative; }
.note b { position: absolute; left: 18px; top: 4px; width: 13px; height: 13px; border: 1px solid #999; border-radius: 50%; background: #333; font: bold 7px/11px "Noto Sans", sans-serif; }
.peek { width: 4px; height: 30px; border-left: 1px solid #555; }
.paint { position: absolute; left: 620px; right: 0; top: 72px; bottom: 94px; display: flex; flex-direction: column; overflow: hidden; background: #fff; border-top: 1px solid #8fb08f; border-left: 1px solid #a5c4a5; border-bottom: 1px solid #4d8d4d; box-shadow: 0 3px 12px #0005; }
.ptitle { height: 22px; display: flex; align-items: center; gap: 5px; padding-left: 5px; flex: none; }
.bar { width: 1px; height: 10px; background: #aaa; margin: 0 1px 0 0; }
.tri.lined { position: relative; margin: 3px 2px 0; }
.tri.lined::before { content: ""; position: absolute; left: -3px; top: -6px; width: 6px; height: 1px; background: #222; }
.ptabs { height: 18px; display: flex; flex: none; }
.ptabs button { width: 46px; }
.ptabs .file { width: 42px; background: #1976ca; color: #fff; }
.ptabs .home { width: 57px; background: #f5f6f7; border: 1px solid #dadbdc; border-bottom: 0; }
.ribbon { height: 70px; flex: none; display: flex; background: #f5f6f7; border-top: 1px solid #e3e4e6; }
.grp { position: relative; flex: none; border-right: 1px solid #dcdfe3; padding: 2px 4px 0; display: flex; flex-direction: column; justify-content: space-between; }
.grp p { text-align: center; line-height: 15px; color: #555; }
.row { display: flex; }
.g1 { width: 105px; }
.g2 { width: 112px; padding-left: 2px; }
.g3 { width: 60px; padding-left: 2px; }
.g4 { width: 42px; padding-left: 3px; padding-right: 3px; }
.g5 { width: 192px; }
.g6 { width: 40px; }
.big { flex-direction: column; height: 51px; border: 1px solid transparent; justify-content: flex-start; }
.g2 .big { width: 38px; }
.big.paste { width: 44px; border-color: #8ab5dd; }
.big .up { height: 28px; display: flex; align-items: center; }
.big .dn { display: flex; flex-direction: column; align-items: center; width: 100%; flex: 1; line-height: 12px; gap: 2px; }
.paste .dn { background: #cde4f9; border-top: 1px solid #a9cdee; }
.big.sel { background: #cde4f9; border-color: #7fb2e2; }
.list { padding-left: 4px; }
.list button { height: 17px; gap: 2px; justify-content: flex-start; }
.list .tri { margin-left: 2px; }
.g2 .list { padding-left: 3px; }
.off { color: #9a9a9a; }
.paint .off .tri { border-top-color: #9a9a9a; }
.six { display: grid; grid-template-columns: repeat(3, 18px); grid-auto-rows: 21px; padding-top: 5px; }
.gallery { display: flex; width: 120px; height: 47px; margin-top: 2px; border: 1px solid #d5dce4; background: #fafbfc; }
.shapes { flex: 1; display: grid; grid-template-columns: repeat(7, 1fr); }
.shapes :deep(svg) { fill: #eaf4fb; stroke: #2c6488; stroke-width: 1.3; }
.updn { width: 10px; border-left: 1px solid #d5dce4; display: flex; flex-direction: column; align-items: center; justify-content: space-around; }
.paint .updn .dim { border-width: 0 2px 3px; border-bottom-color: #aaa; }
.g5 .list { padding-left: 3px; }
.color { width: 32px; height: 51px; flex-direction: column; justify-content: flex-start; padding-top: 3px; border: 1px solid transparent; line-height: 11px; gap: 3px; }
.g7 { width: 170px; flex-direction: row; justify-content: flex-start; padding-left: 3px; }
.color.cur { background: #cde4f9; border-color: #8ab5dd; }
.sw { width: 20px; height: 20px; margin: 1px; border: 1px solid #888; background: #fff; }
.sw.black { width: 22px; height: 22px; margin: 0; background: #000; border-color: #555; }
.pal { display: grid; grid-template-columns: repeat(3, 14px); grid-auto-rows: 14px; gap: 3px; padding: 2px 0 0 1px; }
.pal button { border: 1px solid #a0a0a0; outline: 1px solid #fff; outline-offset: -2px; }
.canvas { position: relative; flex: 1; display: flex; flex-direction: column; padding: 5px 0 12px 3px; background: linear-gradient(#c6cfdf, #dce6f3 6px); }
.sheet { flex: 1; background: #fff; }
.shade { height: 6px; margin-left: 7px; background: linear-gradient(#b4bdd5, #dce6f3); }
.handle { position: absolute; left: 385px; bottom: 14px; width: 4px; height: 4px; border: 1px solid #555; background: #fff; }
.pstat { height: 19px; flex: none; display: flex; background: #f0f0f0; border-top: 1px solid #ddd; }
.pstat span { width: 119px; display: flex; align-items: center; gap: 3px; padding-left: 3px; border-right: 1px solid #d4d4d4; flex: none; }
.pstat span:first-child { width: 118px; padding-left: 1px; }
.pstat span:last-child { border: 0; }
.popup { position: absolute; left: 4px; top: 95px; width: 107px; background: #fdfdfd; border: 1px solid #ddd; box-shadow: 2px 2px 3px #0003; }
.popup button { width: 100%; height: 17px; justify-content: flex-start; }
.popup i { width: 20px; height: 17px; margin-right: 5px; display: flex; align-items: center; justify-content: center; border-right: 1px solid #e8e8e8; }
</style>
